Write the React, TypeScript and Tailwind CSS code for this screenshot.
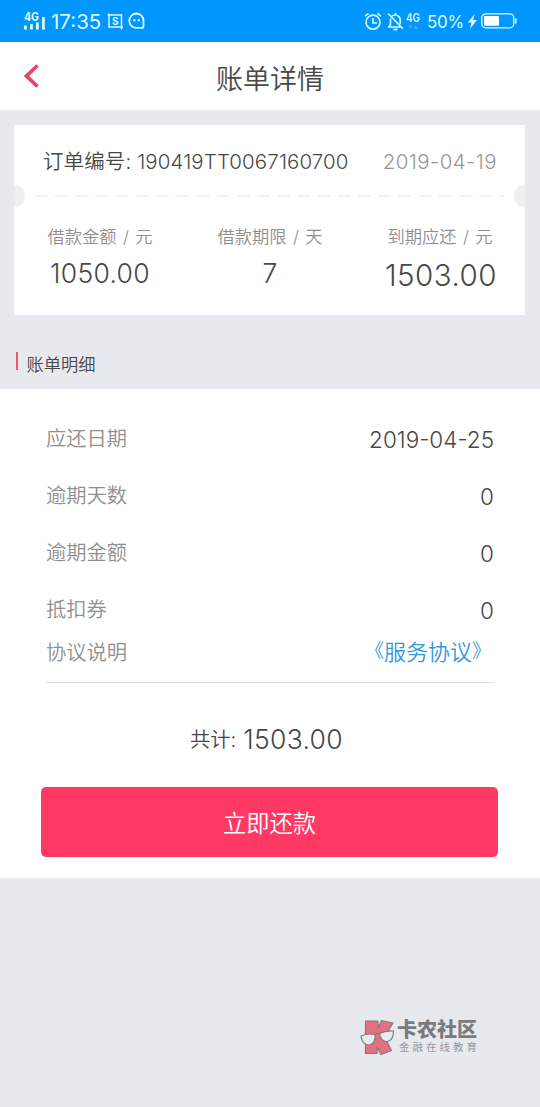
import { type ReactNode } from 'react'

interface Row {
  label: string
  value: string
}

const SUMMARY = [
  { label: '借款金额 / 元', value: '1050.00', className: 'text-[26.5px] tracking-[0.3px]' },
  { label: '借款期限 / 天', value: '7', className: 'text-[26.5px]' },
  { label: '到期应还 / 元', value: '1503.00', className: 'pt-0.5 pl-0.5 text-[29.5px] tracking-[0.5px]' }
]

const DETAILS: Row[] = [
  { label: '应还日期', value: '2019-04-25' },
  { label: '逾期天数', value: '0' },
  { label: '逾期金额', value: '0' },
  { label: '抵扣券', value: '0' }
]

function StatusBar() {
  return (
    <div className="flex h-[42px] items-center justify-between bg-[#0096ff] px-[23px] font-normal text-[#dcfbff]">
      <div className="flex items-center">
        {/* Signal with network type */}
        <svg className="overflow-visible" width="23" height="22" viewBox="0 0 23 22" fill="currentColor">
          <text x="1" y="11" fontSize="12" fontWeight="700" textLength="15" lengthAdjust="spacingAndGlyphs">
            4G
          </text>
          <rect x="1" y="15.5" width="2.8" height="4" />
          <rect x="7" y="14" width="2.8" height="5.5" />
          <rect x="13" y="12.5" width="2.8" height="7" />
          <rect x="19" y="7" width="2.8" height="12.5" />
        </svg>
        <span className="ml-[5px] w-[51px] pt-0.5 text-[20.5px] leading-none whitespace-nowrap">17:35</span>
        {/* Screenshot */}
        <svg className="ml-[5px]" width="17" height="17" viewBox="0 0 17 17" fill="none" stroke="currentColor" strokeWidth="1.5">
          <path d="M2 .5v13.5h14M.5 2h14v14.5" />
          <text x="5" y="11.6" fontSize="10" fontWeight="700" fill="currentColor" stroke="none">
            S
          </text>
        </svg>
        {/* Chat bubble */}
        <svg className="ml-1" width="18" height="18" viewBox="0 0 18 18" fill="none" stroke="currentColor" strokeWidth="1.8">
          <path d="M8.5 1.5a7.2 7.2 0 1 0 0 14.4h5q2 0 2-2V8.7a7.2 7.2 0 0 0-7-7.200z" strokeLinejoin="round" />
          <circle cx="6.3" cy="8.3" r="1.2" fill="currentColor" stroke="none" />
          <circle cx="10.8" cy="8.3" r="1.2" fill="currentColor" stroke="none" />
        </svg>
      </div>
      <div className="flex items-center">
        {/* Alarm */}
        <svg width="18" height="19" viewBox="0 0 18 19" fill="none" stroke="currentColor" strokeWidth="1.7">
          <circle cx="9" cy="10.2" r="7" />
          <path d="M9 6v5h4M1.2 4.2l3.3-2.8M16.8 4.2l-3.3-2.8" />
        </svg>
        {/* Muted bell */}
        <svg className="ml-[5px]" width="17" height="19" viewBox="0 0 17 19" fill="none" stroke="currentColor" strokeWidth="1.6">
          <path d="M5 4.2A5 5 0 0 1 13.2 8v4.200M3.5 6.5v5.800L1.8 15h11.600M8.5 1v1.500M1 1.5l15 15.200" />
          <path d="M6.5 17.5h4" strokeWidth="2" />
        </svg>
        <svg className="ml-[2px] overflow-visible" width="15" height="21" viewBox="0 0 15 21" fill="currentColor">
          <text x="0" y="11" fontSize="11.5" fontWeight="600" textLength="14" lengthAdjust="spacingAndGlyphs">
            4G
          </text>
          <path d="M2 14h5l-2.5 4zM7.5 18h5L10 14z" fill="#2fadff" />
        </svg>
        <span className="ml-[6px] w-[36px] pt-0.5 text-[17px] leading-none tracking-[-0.3px] whitespace-nowrap">50%</span>
        <svg className="ml-[5px]" width="9" height="15" viewBox="0 0 9 15" fill="currentColor">
          <path d="M6.5 0L0 8.500h3.500L2 15l7-9H5.200z" />
        </svg>
        {/* Battery */}
        <svg className="ml-[4px]" width="36" height="16" viewBox="0 0 36 16" fill="none" stroke="currentColor">
          <rect x=".8" y=".8" width="32" height="14" rx="4" strokeWidth="1.3" />
          <rect x="3" y="3" width="15" height="9.8" rx="1" fill="#fff" stroke="none" />
          <path d="M34.8 5.5v5" strokeWidth="1.6" />
        </svg>
      </div>
    </div>
  )
}

function DetailRow({ label, children, short = false }: { label: string; children: ReactNode; short?: boolean }) {
  return (
    <div className={`flex items-center justify-between ${short ? 'h-7' : 'h-[57px]'}`}>
      <span className="pt-0.5 text-[20.3px] text-[#8f8f8f]">{label}</span>
      {children}
    </div>
  )
}

function Watermark() {
  return (
    <div className="flex items-start pt-[141px] pl-[360px]">
      <svg width="35" height="37" viewBox="0 0 35 37" fill="#e5717f" stroke="#827b80" strokeWidth="1.2">
        <path d="M5.5 2H18v7l3.500-7.500L33 4l-8.500 14 7 13.500L21 35.500 17 28v6.500H5.500z" strokeLinejoin="round" />
        <g fill="#e9eaee">
          <path d="M1 17q7-3 14-1.500 1 9-5.500 10.500Q2 26 1 17z" />
          <path d="M19.5 14.500q6-3 14-2.500 0 9-6 10.500-6.500.5-8-8z" />
        </g>
        <path d="M15 16q2.3-2 4.500-1.500" fill="none" />
      </svg>
      <div className="ml-[2px] flex flex-col whitespace-nowrap text-[#7b7b7f]">
        <span className="h-[23px] text-[20px] leading-[22px] font-black">卡农社区</span>
        <span className="ml-[2px] h-3 text-[10.5px] leading-3 font-normal tracking-[3px] text-[#98999d]">金融在线教育</span>
      </div>
    </div>
  )
}

export default function App() {
  return (
    <div className="h-[1107px] w-[540px] overflow-hidden bg-[#e7e9ee] font-[Inter,'Noto_Sans_CJK_SC',sans-serif] font-[350] text-[#484848]">
      <StatusBar />

      <header className="grid h-[68px] grid-cols-[80px_1fr_80px] items-center bg-white">
        <button aria-label="返回" className="pl-6">
          <svg width="16" height="24" viewBox="0 0 16 24" fill="none" stroke="#e5446d" strokeWidth="3.8">
            <path d="M13.5 1.5L2.5 12l11 10.500" />
          </svg>
        </button>
        <h1 className="pt-1.5 text-center text-[27px] leading-none">账单详情</h1>
      </header>

      {/* Loan summary ticket */}
      <section className="mr-[15px] ml-[14px] mt-[15px] h-[190px] bg-white">
        <div className="flex h-[60px] items-center justify-between pt-3.5 pr-[28px] pl-[29px] whitespace-nowrap">
          <span className="text-[20.5px] tracking-[0.1px]">订单编号: 190419TT0067160700</span>
          <span className="text-[20.5px] tracking-[0.4px] text-[#979797]">2019-04-19</span>
        </div>
        <div className="flex h-[22px] items-center justify-between">
          <i className="h-[22px] w-[11px] rounded-r-full bg-[#efefef]" />
          <svg width="480" height="2" stroke="#efefef" strokeWidth="1.6">
            <path d="M5 1H474" strokeDasharray="12.5 7.7" />
          </svg>
          <i className="h-[22px] w-[11px] rounded-l-full bg-[#efefef]" />
        </div>
        <div className="flex pt-[18px] pl-px">
          {SUMMARY.map((item) => (
            <div key={item.label} className="flex w-[170px] flex-col items-center whitespace-nowrap">
              <span className="h-6 text-[17.3px] leading-6 text-[#8f8f8f] [word-spacing:1.5px]">{item.label}</span>
              <span className={`h-12 leading-[49px] ${item.className}`}>{item.value}</span>
            </div>
          ))}
        </div>
      </section>

      <div className="flex h-[74px] items-start pt-[37px] pl-4">
        <i className="h-[18px] w-[1.5px] bg-[#ee5a64]" />
        <h2 className="ml-[9px] pt-px text-[17.3px] leading-6">账单明细</h2>
      </div>

      {/* Bill details */}
      <main className="h-[489px] bg-white px-[41px] pt-[21px]">
        <div className="mx-[5px] h-[273px] border-b border-[#dedede]">
          {DETAILS.map((row) => (
            <DetailRow key={row.label} label={row.label}>
              <span className="pt-0.5 text-[22.5px]">{row.value}</span>
            </DetailRow>
          ))}
          <DetailRow label="协议说明" short>
            <a className="flex items-center pt-px pr-[3px] text-[22px] text-[#3598db]">
              <span className="text-[19px]">《</span>服务协议<span className="text-[19px]">》</span>
            </a>
          </DetailRow>
        </div>
        <div className="flex h-[104px] items-center justify-center pt-2.5 pr-[7px] text-[20.3px]">
          共计:<span className="ml-[7px] text-[26.5px] tracking-[0.3px]">1503.00</span>
        </div>
        <button className="h-[70px] w-[457px] rounded-[5px] bg-[#ff3864] pt-1 text-[23.3px] text-white">立即还款</button>
      </main>

      <Watermark />
    </div>
  )
}
